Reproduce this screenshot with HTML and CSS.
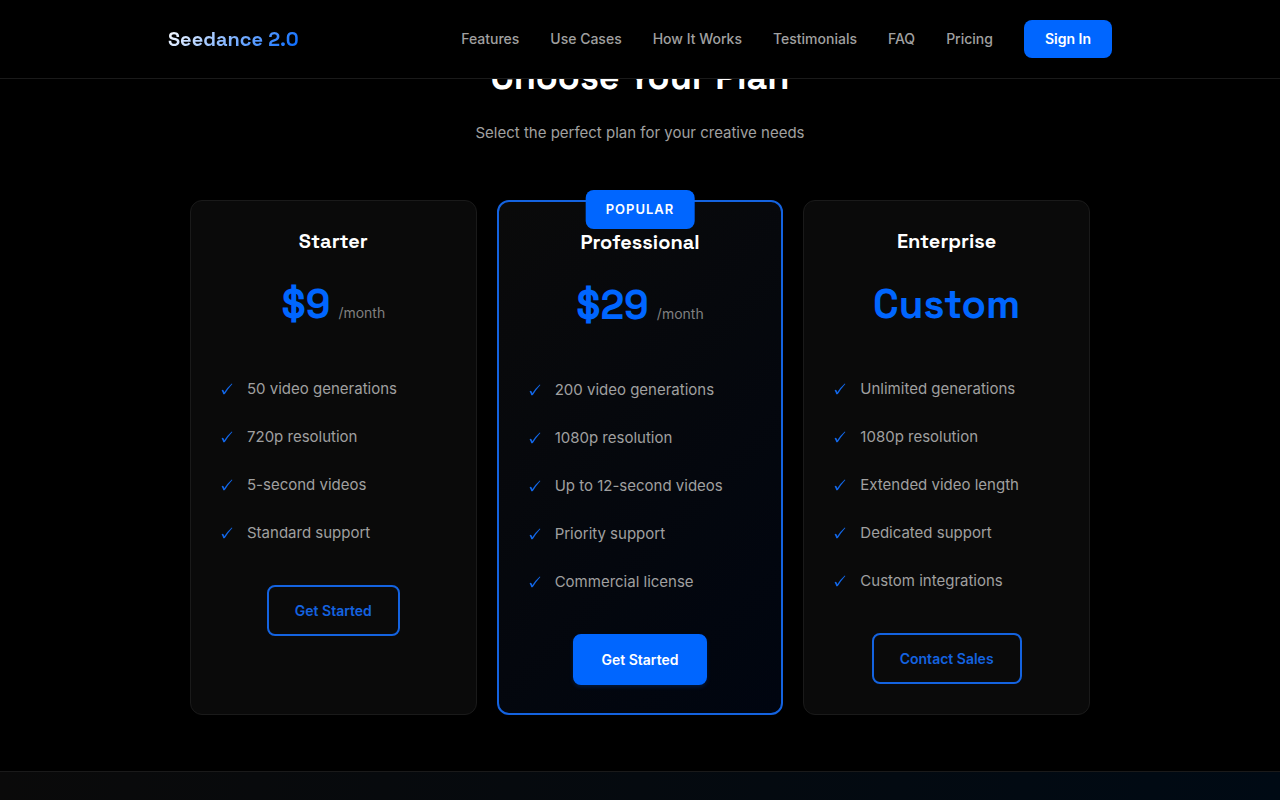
FILE: index.html
```html
<!DOCTYPE html>
<html lang="en">
<head>
    <meta charset="UTF-8">
    <meta name="viewport" content="width=device-width, initial-scale=1.0">
    <title>Seedance 2.0</title>
    <link rel="stylesheet" href="styles.css">
</head>
<body>
    <!-- Check mark shared by the feature lists -->
    <svg class="sprite" width="0" height="0" aria-hidden="true">
        <symbol id="check" viewBox="0 0 12 12">
            <path d="M0.6 7.4 Q1.4 6.5 2.2 7 Q2.8 7.6 3.3 9.2 Q6.6 4.2 10.8 0.5 L11.4 0.9 Q7.3 5.3 3.9 10.9 Q2.9 11.6 2.3 11.2 Q1.7 9 0.6 7.4 Z"/>
        </symbol>
    </svg>

    <header class="header">
        <nav class="nav">
            <a href="#" class="logo">Seedance 2.0</a>
            <div class="nav-links">
                <a href="#features">Features</a>
                <a href="#use-cases">Use Cases</a>
                <a href="#how-it-works">How It Works</a>
                <a href="#testimonials">Testimonials</a>
                <a href="#faq">FAQ</a>
                <a href="#pricing">Pricing</a>
                <button type="button" class="sign-in">Sign In</button>
            </div>
        </nav>
    </header>

    <main>
        <section class="pricing" id="pricing">
            <h2>Choose Your Plan</h2>
            <p class="subtitle">Select the perfect plan for your creative needs</p>

            <div class="pricing-grid">
                <div class="card">
                    <h3>Starter</h3>
                    <div class="price">$9<span>/month</span></div>
                    <ul>
                        <li><svg class="check"><use href="#check"/></svg>50 video generations</li>
                        <li><svg class="check"><use href="#check"/></svg>720p resolution</li>
                        <li><svg class="check"><use href="#check"/></svg>5-second videos</li>
                        <li><svg class="check"><use href="#check"/></svg>Standard support</li>
                    </ul>
                    <button type="button" class="btn btn-outline">Get Started</button>
                </div>

                <div class="card popular">
                    <div class="badge">POPULAR</div>
                    <h3>Professional</h3>
                    <div class="price">$29<span>/month</span></div>
                    <ul>
                        <li><svg class="check"><use href="#check"/></svg>200 video generations</li>
                        <li><svg class="check"><use href="#check"/></svg>1080p resolution</li>
                        <li><svg class="check"><use href="#check"/></svg>Up to 12-second videos</li>
                        <li><svg class="check"><use href="#check"/></svg>Priority support</li>
                        <li><svg class="check"><use href="#check"/></svg>Commercial license</li>
                    </ul>
                    <button type="button" class="btn btn-primary">Get Started</button>
                </div>

                <div class="card">
                    <h3>Enterprise</h3>
                    <div class="price">Custom</div>
                    <ul>
                        <li><svg class="check"><use href="#check"/></svg>Unlimited generations</li>
                        <li><svg class="check"><use href="#check"/></svg>1080p resolution</li>
                        <li><svg class="check"><use href="#check"/></svg>Extended video length</li>
                        <li><svg class="check"><use href="#check"/></svg>Dedicated support</li>
                        <li><svg class="check"><use href="#check"/></svg>Custom integrations</li>
                    </ul>
                    <button type="button" class="btn btn-outline">Contact Sales</button>
                </div>
            </div>
        </section>
        <section class="cta"></section>
    </main>
</body>
</html>
```
FILE: styles.css
```css
* {
    margin: 0;
    padding: 0;
    box-sizing: border-box;
}
body {
    font-family: Inter, "Liberation Sans", sans-serif;
    font-size: 15px;
    line-height: 24px;
    background-color: #000;
    color: #fff;
}
.sprite {
    position: absolute;
}
main {
    display: flex;
    flex-direction: column;
    min-height: 100vh;
}
.header {
    position: fixed;
    top: 0;
    left: 0;
    right: 0;
    z-index: 10;
    background-color: #000;
    border-bottom: 1px solid #1a1a1a;
}
.nav {
    display: flex;
    align-items: center;
    justify-content: space-between;
    max-width: 1000px;
    margin: 0 auto;
    padding: 20px 28px;
}
.logo {
    font-family: "Space Grotesk", Inter, sans-serif;
    font-size: 20px;
    font-weight: 700;
    text-decoration: none;
    background: linear-gradient(135deg, #fff 0%, #0066ff 100%);
    -webkit-background-clip: text;
    background-clip: text;
    color: transparent;
}
.nav-links {
    display: flex;
    align-items: center;
    gap: 31px;
}
.nav-links a {
    color: #a0a0a0;
    font-size: 14px;
    font-weight: 500;
    text-decoration: none;
}
.nav-links a:hover {
    color: #fff;
}
button {
    font-family: inherit;
    font-size: 14px;
    font-weight: 600;
    border: none;
    border-radius: 8px;
    cursor: pointer;
}
.sign-in {
    padding: 7px 21px;
    line-height: 24px;
    background-color: #0066ff;
    color: #fff;
}
.pricing {
    padding: 53px 28px 56px;
    text-align: center;
}
.pricing h2 {
    font-family: "Space Grotesk", Inter, sans-serif;
    font-size: 36px;
    font-weight: 600;
    line-height: 48px;
    margin-bottom: 20px;
}
.subtitle {
    color: #a0a0a0;
    margin-bottom: 55px;
}
.pricing-grid {
    display: grid;
    grid-template-columns: repeat(3, 1fr);
    gap: 20px;
    max-width: 900px;
    margin: 0 auto;
}
.card {
    position: relative;
    padding: 28px;
    background-color: #0a0a0a;
    border: 1px solid #1a1a1a;
    border-radius: 12px;
}
.card.popular {
    border: 2px solid #1463e0;
    background: linear-gradient(135deg, #0a0a0a 0%, #000510 100%);
}
.badge {
    position: absolute;
    top: -12px;
    left: 50%;
    transform: translateX(-50%);
    padding: 8px 20px;
    border-radius: 8px;
    background-color: #0066ff;
    font-size: 13px;
    font-weight: 600;
    line-height: 23px;
    letter-spacing: 1px;
}
.card h3 {
    font-family: "Space Grotesk", Inter, sans-serif;
    font-size: 20px;
    font-weight: 600;
    margin-bottom: 18px;
}
.price {
    font-family: "Space Grotesk", Inter, sans-serif;
    font-size: 40px;
    font-weight: 700;
    line-height: 68px;
    color: #0066ff;
    margin-bottom: 26px;
}
.price span {
    font-family: Inter, sans-serif;
    font-size: 14px;
    font-weight: 400;
    line-height: 24px;
    color: #808080;
    margin-left: 8px;
}
.card ul {
    list-style: none;
    text-align: left;
    margin-bottom: 28px;
}
.card li {
    display: flex;
    align-items: center;
    gap: 14px;
    padding: 12px 0 12px 2px;
    color: #a0a0a0;
}
.check {
    width: 12px;
    height: 12px;
    fill: #1266e6;
}
.btn {
    padding: 12px 26px;
    line-height: 23px;
    border: 2px solid #1463e0;
}
.btn-outline {
    background: transparent;
    color: #1463e0;
}
.btn-primary {
    background-color: #0066ff;
    border-color: #0066ff;
    color: #fff;
    box-shadow: 0 2px 4px rgba(0, 102, 255, 0.2);
}
.cta {
    flex: 1;
    border-top: 1px solid #1a1a1a;
    background: linear-gradient(90deg, #0a0a0a 0%, #000a14 100%);
}
```
